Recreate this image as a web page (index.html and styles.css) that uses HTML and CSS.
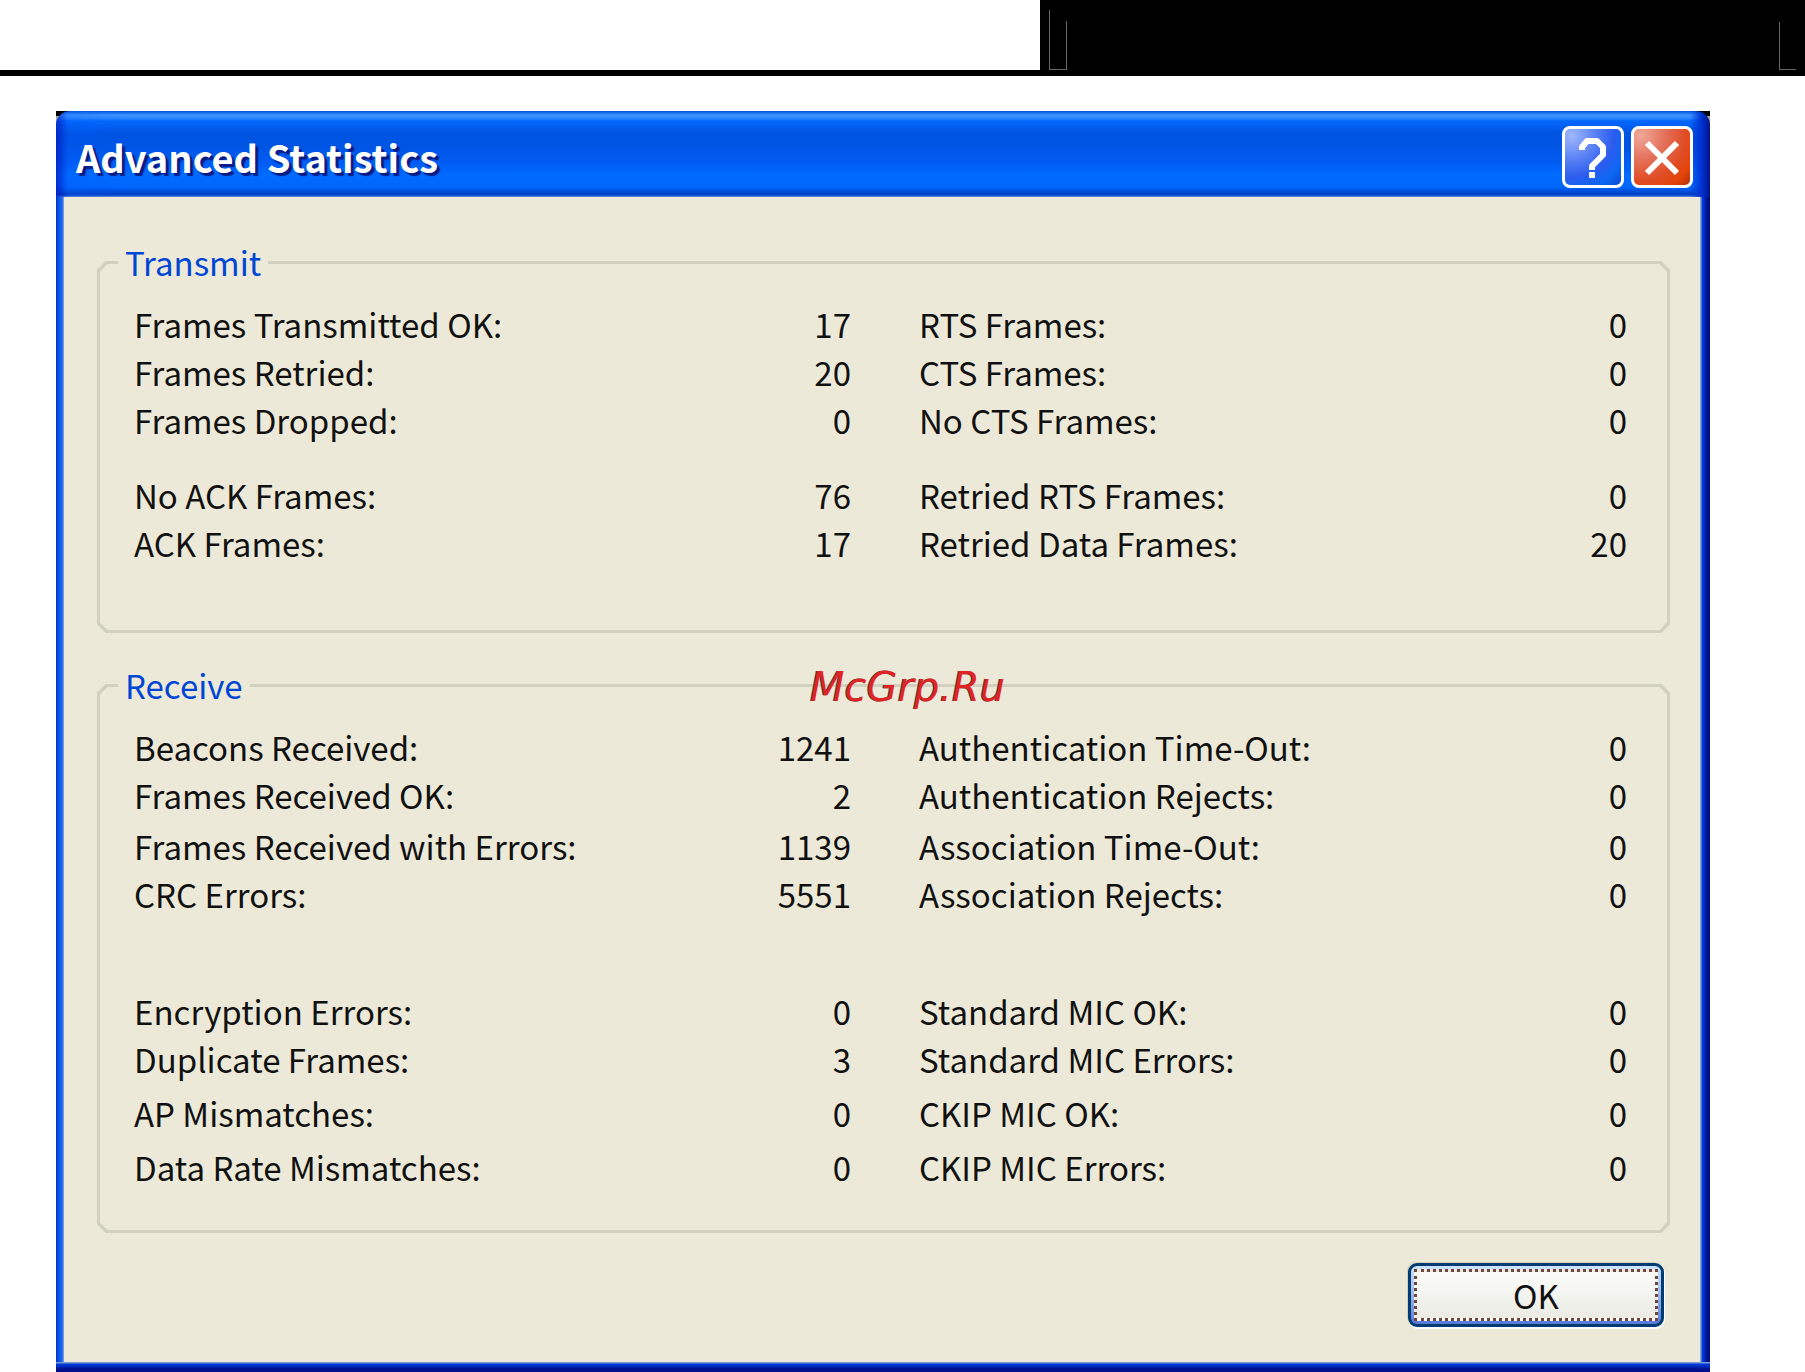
FILE: index.html
```html
<!DOCTYPE html>
<html lang="en">
<head>
    <meta charset="UTF-8">
    <meta name="viewport" content="width=device-width, initial-scale=1.0">
    <title>Advanced Statistics</title>
    <link rel="stylesheet" href="styles.css">
</head>
<body>
    <header class="page-header">
        <div class="header-blank"></div>
        <div class="header-block">
            <div class="header-tab"></div>
            <div class="header-tab-end"></div>
        </div>
    </header>

    <main class="dialog">
        <div class="titlebar">
            <h1>Advanced Statistics</h1>
            <button class="title-btn help" aria-label="Help">
                <svg width="62" height="62" viewBox="0 0 62 62" fill="none">
                    <path d="M20 24v-3l5-6h10l6 6v8l-5 5-6 6v4" stroke="#fff" stroke-width="6" stroke-linejoin="round" />
                    <path d="M27 46h6v6h-6z" fill="#fff" />
                </svg>
            </button>
            <button class="title-btn close" aria-label="Close">
                <svg width="62" height="62" viewBox="0 0 62 62" fill="none">
                    <path d="M16 17L46 47M46 17L16 47" stroke="#fff" stroke-width="6" />
                </svg>
            </button>
        </div>

        <div class="frame">
            <div class="content">
                <fieldset>
                    <legend>Transmit</legend>
                    <table class="transmit">
                        <tr><th>Frames Transmitted OK:</th><td>17</td><th>RTS Frames:</th><td>0</td></tr>
                        <tr><th>Frames Retried:</th><td>20</td><th>CTS Frames:</th><td>0</td></tr>
                        <tr><th>Frames Dropped:</th><td>0</td><th>No CTS Frames:</th><td>0</td></tr>
                        <tr class="gap-medium"><th>No ACK Frames:</th><td>76</td><th>Retried RTS Frames:</th><td>0</td></tr>
                        <tr><th>ACK Frames:</th><td>17</td><th>Retried Data Frames:</th><td>20</td></tr>
                    </table>
                </fieldset>

                <fieldset>
                    <legend>Receive</legend>
                    <table class="receive">
                        <tr><th>Beacons Received:</th><td>1241</td><th>Authentication Time-Out:</th><td>0</td></tr>
                        <tr><th>Frames Received OK:</th><td>2</td><th>Authentication Rejects:</th><td>0</td></tr>
                        <tr class="gap-tiny"><th>Frames Received with Errors:</th><td>1139</td><th>Association Time-Out:</th><td>0</td></tr>
                        <tr><th>CRC Errors:</th><td>5551</td><th>Association Rejects:</th><td>0</td></tr>
                        <tr class="gap-large"><th>Encryption Errors:</th><td>0</td><th>Standard MIC OK:</th><td>0</td></tr>
                        <tr><th>Duplicate Frames:</th><td>3</td><th>Standard MIC Errors:</th><td>0</td></tr>
                        <tr class="gap-small"><th>AP Mismatches:</th><td>0</td><th>CKIP MIC OK:</th><td>0</td></tr>
                        <tr class="gap-small"><th>Data Rate Mismatches:</th><td>0</td><th>CKIP MIC Errors:</th><td>0</td></tr>
                    </table>
                </fieldset>

                <div class="actions">
                    <button class="ok"><span>OK</span></button>
                </div>
            </div>
        </div>
        <div class="watermark">McGrp.Ru</div>
    </main>
</body>
</html>
```
FILE: styles.css
```css
* { box-sizing: border-box; }

body {
    margin: 0;
    background: #fff;
    color: #111;
    font-family: "Noto Sans CJK JP", "Liberation Sans", sans-serif;
    font-size: 33px;
}

button {
    padding: 0;
    font: inherit;
    color: inherit;
}

/* Page header */
.page-header {
    display: grid;
    grid-template-columns: 1040fr 765fr;
    height: 76px;
    border-bottom: 6px solid #000;
}

.header-block {
    display: flex;
    justify-content: space-between;
    align-items: flex-end;
    padding: 0 9px;
    background: #000;
}

.header-tab {
    width: 18px;
    height: 60px;
    border: solid #666;
    border-width: 0 0 1px 1px;
    background: linear-gradient(#666, #666) right bottom / 1px 48px no-repeat;
}

.header-tab-end {
    width: 17px;
    height: 48px;
    border: solid #666;
    border-width: 0 0 1px 1px;
}

/* Dialog window */
.dialog {
    position: relative;
    margin: 35px 95px 0 56px;
    background: linear-gradient(#000 5px, #a8a494 5px);
}

.titlebar {
    display: flex;
    align-items: center;
    gap: 7px;
    height: 86px;
    padding: 5px 17px 0 20px;
    border-radius: 14px 14px 0 0;
    background:
        linear-gradient(90deg, rgba(0, 20, 190, 0.7), rgba(0, 90, 255, 0.2) 12px, transparent 70px),
        linear-gradient(270deg, #00148c, #0030d0 8px, transparent 20px),
        linear-gradient(#0050d8 0, #3c94ff 4px, #3088ff 7px, #0268fc 10px, #0054e2 22px, #0054e4 36px, #005cf4 52px, #006cff 64px, #0066fc 76px, #0044cc 82px, #0040c8 84px, #7090d8 86px);
}

.titlebar h1 {
    flex: 1;
    margin: 0;
    font-size: 38px;
    line-height: 48px;
    font-weight: bold;
    color: #fff;
    text-shadow: 3px 3px 1px #0a1c86;
}

.title-btn {
    width: 62px;
    height: 62px;
    border: 3px solid #fff;
    border-radius: 8px;
    overflow: hidden;
}

.title-btn svg {
    display: block;
    margin: -3px;
}

.help {
    background: radial-gradient(circle at 12% 12%, #a0b8fa, #5880f4 35%, #2c5cee 60%, #0c68f4 80%, #0c48d0);
}

.close {
    background: radial-gradient(circle at 12% 12%, #f0a898, #e4705a 35%, #e04c24 65%, #e44408 82%, #b03008);
}

.frame {
    padding: 0 10px 11px 8px;
    background:
        linear-gradient(#7898d8 1px, #0038d8 2px, #0030c8 4px, #00108c 7px) left bottom / 100% 11px no-repeat,
        linear-gradient(90deg, #0030d0, #1060e8 4px, #1a64ec 6px, #88a8e0 8px) left top / 8px 100% no-repeat,
        linear-gradient(90deg, #90a8d8 1px, #0040dc 2px, #0030c8 4px, #00108c 7px) right top / 10px 100% no-repeat;
}

.content {
    padding: 43px 30px 35px 33px;
    background: #ece9d8;
}

/* Statistics groups */
fieldset {
    min-width: 0;
    margin: 0 0 30px;
    padding: 16px 40px 0 34px;
    border: 3px solid #d2d1bf;
    border-radius: 9px;
    corner-shape: bevel;
}

legend {
    margin-left: -16px;
    padding: 0 7px;
    line-height: 44px;
    color: #0046d5;
}

table {
    width: 100%;
    table-layout: fixed;
    border-collapse: collapse;
}

.transmit { margin-bottom: 63px; }
.receive { margin-bottom: 39px; }

th,
td {
    padding: 0;
    line-height: 48px;
    white-space: nowrap;
}

th {
    font-weight: normal;
    text-align: left;
}

td {
    width: 208px;
    text-align: right;
}

th:nth-child(3) {
    width: 500px;
}

td:nth-child(2) {
    padding-right: 68px;
}

.gap-tiny > * { padding-top: 3px; }
.gap-small > * { padding-top: 6px; }
.gap-medium > * { padding-top: 27px; }
.gap-large > * { padding-top: 69px; }

.actions {
    display: flex;
    justify-content: flex-end;
    padding-right: 6px;
}

.ok {
    width: 256px;
    height: 64px;
    padding: 3px;
    border: 3px solid #003c74;
    border-radius: 9px;
    background: linear-gradient(#cee3ff, #9cb8ec 50%, #5878dc);
    box-shadow: 1px 2px 1px #fff, -1px -1px 1px #d4d0bc;
}

.ok span {
    display: block;
    border: 3px dotted #6c4440;
    line-height: 46px;
    background: linear-gradient(#fcfcfa, #ebebe4);
}

.watermark {
    position: absolute;
    top: 552px;
    left: 754px;
    font: italic 40px/48px "DejaVu Sans", sans-serif;
    color: #e02424;
    text-shadow: -1px 0 0 #444;
}
```
